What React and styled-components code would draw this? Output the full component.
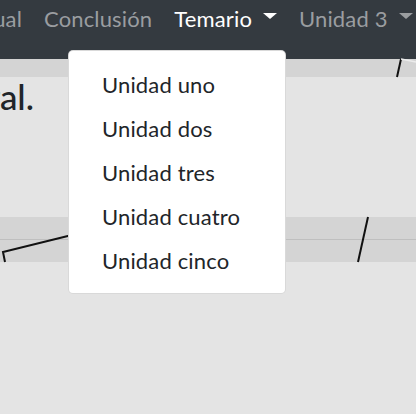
import React from "react";
import styled, { createGlobalStyle } from "styled-components";

const GlobalStyle = createGlobalStyle`
  html, body { margin: 0; padding: 0; }
  body {
    background: #e4e4e4;
    font-family: Lato, "Open Sans", "Noto Sans", sans-serif;
    overflow: hidden;
    width: 416px;
    height: 414px;
  }
`;

const Page = styled.div`
  position: relative;
  width: 416px;
  height: 414px;
  overflow: hidden;
  display: flex;
  flex-direction: column;
`;

const Navbar = styled.nav`
  height: 59px;
  flex: none;
  background: #343a40;
  display: flex;
  align-items: flex-start;
  padding-top: 2px;
  box-sizing: border-box;
`;

const NavLink = styled.a`
  font-size: 22px;
  line-height: 33px;
  padding: 0 11px;
  white-space: nowrap;
  color: ${(p) => (p.$active ? "#ffffff" : "#9a9da0")};
  text-decoration: none;
  display: flex;
  align-items: baseline;
  letter-spacing: 0.15px;
`;

const ClippedLink = styled(NavLink)`
  padding-left: 0;
  width: 22px;
  justify-content: flex-end;
`;

const Caret = styled.span`
  display: inline-block;
  margin-left: 11px;
  width: 0;
  height: 0;
  border-top: 6px solid currentColor;
  border-left: 7px solid transparent;
  border-right: 7px solid transparent;
  transform: translateY(-8px);
`;

const Band = styled.div`
  position: relative;
  flex: none;
  height: ${(p) => p.$h}px;
  background: #d4d4d4;
  display: flex;
  flex-direction: column;
`;

const BandRow = styled.div`
  flex: 1;
  & + & { border-top: 1px solid #bfbfbf; }
`;

const Drawing = styled.svg`
  position: absolute;
  inset: 0;
  width: 100%;
  height: 100%;
  overflow: visible;
`;

const Main = styled.div`
  height: 140px;
  flex: none;
  display: flex;
`;

const HeadingBox = styled.div`
  width: 34px;
  display: flex;
  justify-content: flex-end;
  white-space: nowrap;
`;

const Heading = styled.h3`
  margin: -2px 0 0;
  font-size: 35px;
  line-height: 42px;
  font-weight: 500;
  color: #212529;
`;

const Dropdown = styled.div`
  position: absolute;
  left: 68px;
  top: 50px;
  width: 218px;
  box-sizing: border-box;
  background: #fff;
  border: 1px solid rgba(0, 0, 0, 0.15);
  border-radius: 5px;
  padding: 11px 0;
  display: flex;
  flex-direction: column;
`;

const DropItem = styled.a`
  font-size: 22px;
  line-height: 33px;
  padding: 5.5px 33px;
  color: #212529;
  white-space: nowrap;
  text-decoration: none;
  letter-spacing: 0.15px;
`;

const units = ["Unidad uno", "Unidad dos", "Unidad tres", "Unidad cuatro", "Unidad cinco"];

export default function App() {
  return (
    <Page>
      <GlobalStyle />
      <Navbar>
        <ClippedLink>Manual</ClippedLink>
        <NavLink>Conclusión</NavLink>
        <NavLink $active>
          Temario<Caret />
        </NavLink>
        <NavLink>
          Unidad 3<Caret />
        </NavLink>
      </Navbar>
      <Band $h={18}>
        <Drawing viewBox="0 0 416 18" preserveAspectRatio="none">
          <line x1="401" y1="0" x2="397" y2="18" stroke="#111" strokeWidth="2" />
          <line x1="401" y1="0" x2="416" y2="3" stroke="#ececec" strokeWidth="1.5" />
        </Drawing>
      </Band>
      <Main>
        <HeadingBox>
          <Heading>Objetivo general.</Heading>
        </HeadingBox>
      </Main>
      <Band $h={45}>
        <BandRow />
        <BandRow />
        <Drawing viewBox="0 0 416 45" preserveAspectRatio="none">
          <polyline points="80,16 3,35 5,45" fill="none" stroke="#111" strokeWidth="2" />
          <line x1="368" y1="0" x2="358" y2="45" stroke="#111" strokeWidth="2" />
        </Drawing>
      </Band>
      <Dropdown>
        {units.map((u) => (
          <DropItem key={u}>{u}</DropItem>
        ))}
      </Dropdown>
    </Page>
  );
}
